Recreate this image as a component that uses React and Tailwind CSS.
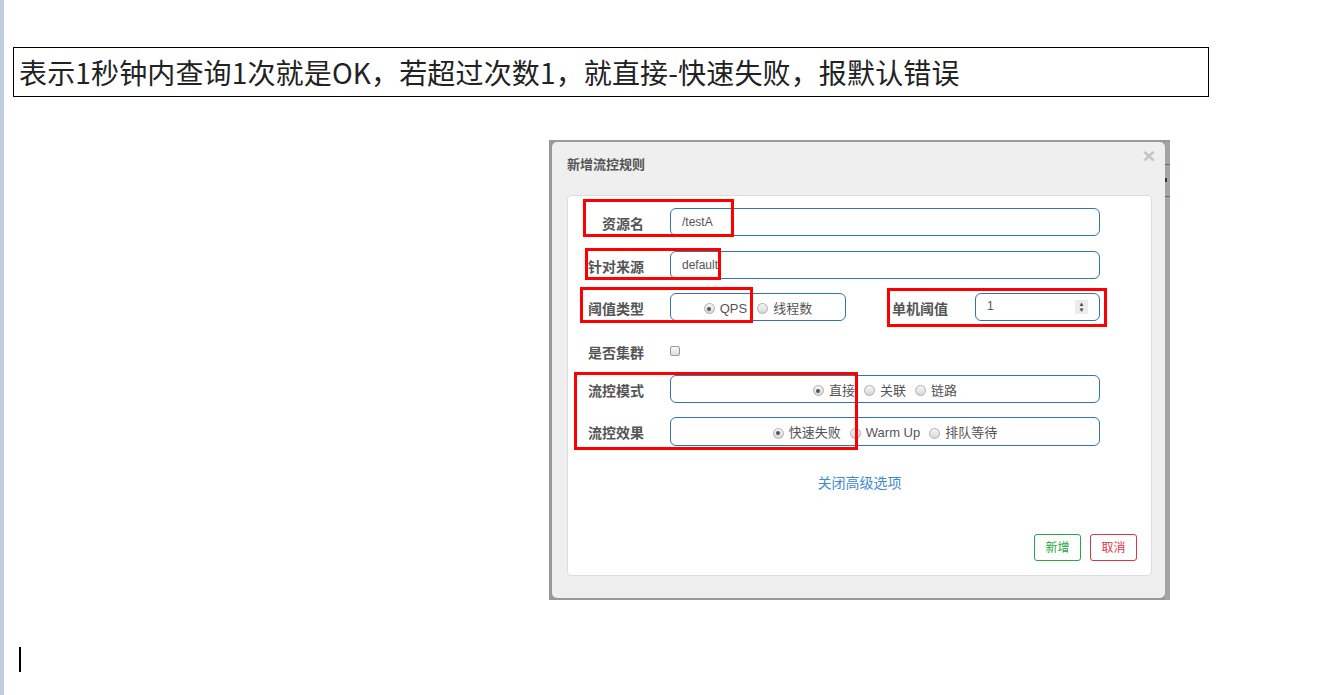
const font = "font-['Liberation_Sans','Noto_Sans_CJK_SC',sans-serif]"

function Radio({ checked, label }) {
  return (
    <span className="flex items-center gap-[5px]">
      <span className="flex h-[11px] w-[11px] items-center justify-center rounded-full border border-[#b0b0b0] bg-linear-to-b from-[#f7f7f7] to-[#d6d6d6]">
        {checked && <span className="h-[4px] w-[4px] rounded-full bg-[#555]" />}
      </span>
      <span>{label}</span>
    </span>
  )
}

function Label({ children, className = '' }) {
  return (
    <div className={`w-[76px] shrink-0 pt-[4px] text-right text-[14px] font-semibold text-[#555] ${className}`}>{children}</div>
  )
}

function Box({ children, className = '' }) {
  return (
    <div className={`flex h-full items-center rounded-[6px] border border-[#3572b0] text-[12px] text-[#555] ${className}`}>
      {children}
    </div>
  )
}

function Panel() {
  return (
    <div className="flex h-[381px] w-[585px] flex-col rounded-[4px] border border-[#dcdcdc] bg-white">
      <div className="mt-[12px] flex h-[28px] items-center">
        <Label>资源名</Label>
        <div className="ml-[26px] h-full w-[430px]">
          <Box className="pl-[11px]">/testA</Box>
        </div>
      </div>
      <div className="mt-[15px] flex h-[28px] items-center">
        <Label>针对来源</Label>
        <div className="ml-[26px] h-full w-[430px]">
          <Box className="pl-[11px]">default</Box>
        </div>
      </div>
      <div className="mt-[14px] flex h-[28px] items-center">
        <Label>阈值类型</Label>
        <div className="ml-[26px] h-full w-[176px]">
          <Box className="justify-center gap-[10px] pt-[3px] text-[13px]">
            <Radio checked label="QPS" />
            <Radio label="线程数" />
          </Box>
        </div>
        <div className="ml-[46px] w-[56px] shrink-0 pt-[4px] text-[14px] font-semibold text-[#555]">单机阈值</div>
        <div className="ml-[27px] h-full w-[125px]">
          <Box className="justify-between pl-[11px] pr-[11px]">
            <span className="-mt-[3px]">1</span>
            <span className="flex h-[14px] w-[13px] flex-col items-center justify-center bg-[#ececec] text-[6px] leading-[6px] text-[#444]">
              <span>▲</span>
              <span>▼</span>
            </span>
          </Box>
        </div>
      </div>
      <div className="mt-[16px] flex h-[28px] items-center">
        <Label>是否集群</Label>
        <div className="ml-[26px] h-[10px] w-[10px] rounded-[2px] border border-[#999] bg-linear-to-b from-[#fafafa] to-[#dedede]" />
      </div>
      <div className="mt-[10px] flex h-[28px] items-center">
        <Label>流控模式</Label>
        <div className="ml-[26px] h-full w-[430px]">
          <Box className="justify-center gap-[9px] pt-[3px] text-[13px]">
            <Radio checked label="直接" />
            <Radio label="关联" />
            <Radio label="链路" />
          </Box>
        </div>
      </div>
      <div className="mt-[14px] flex h-[29px] items-center">
        <Label>流控效果</Label>
        <div className="ml-[26px] h-full w-[430px]">
          <Box className="justify-center gap-[9px] pt-[3px] text-[13px]">
            <Radio checked label="快速失败" />
            <Radio label="Warm Up" />
            <Radio label="排队等待" />
          </Box>
        </div>
      </div>
      <div className="mt-[28px] text-center text-[14px] leading-[18px] text-[#3f8bd0]">关闭高级选项</div>
      <div className="mr-[14px] mt-[42px] flex justify-end gap-[9px] text-[12px]">
        <div className="flex h-[27px] w-[47px] items-center justify-center rounded-[3px] border border-[#28a745] text-[#28a745]">新增</div>
        <div className="flex h-[27px] w-[47px] items-center justify-center rounded-[3px] border border-[#dc3545] text-[#dc3545]">取消</div>
      </div>
    </div>
  )
}

function Shot() {
  return (
    <div className={`relative ml-[536px] mt-[43px] flex h-[460px] w-[621px] bg-[#999] pl-[3px] pt-[2px] ${font}`}>
      <div className="flex h-[456px] w-[613px] shrink-0 flex-col rounded-[5px] bg-[#efefef] pl-[15px] pr-[13px]">
        <div className="flex h-[53px] items-start justify-between">
          <span className="mt-[14px] text-[13px] font-bold leading-[18px] text-[#555]">新增流控规则</span>
          <span className="-mr-[3px] mt-[3px] text-[21px] font-bold leading-[21px] text-[#c2c2c2]">×</span>
        </div>
        <Panel />
      </div>
      <div className="flex w-[5px] flex-col bg-[#a4a4a4]">
        <div className="mt-[22px] h-px bg-[#3572b0]" />
        <div className="mt-[13px] h-[4px] w-[2px] bg-[#333]" />
        <div className="mt-[14px] h-px bg-[#3572b0]" />
      </div>

      <div className="absolute left-[34px] top-[59px] h-[38px] w-[151px] border-[3px] border-[#ff0000]" />
      <div className="absolute left-[36px] top-[108px] h-[32px] w-[136px] border-[3px] border-[#ff0000]" />
      <div className="absolute left-[31px] top-[147px] h-[36px] w-[173px] border-[3px] border-[#ff0000]" />
      <div className="absolute left-[338px] top-[148px] h-[39px] w-[220px] border-[3px] border-[#ff0000]" />
      <div className="absolute left-[25px] top-[232px] h-[78px] w-[284px] border-[3px] border-[#ff0000]" />
    </div>
  )
}

export default function App() {
  return (
    <div className="flex h-[695px] w-[1335px] overflow-hidden bg-white">
      <div className="w-[4px] shrink-0 bg-[#c2cedb]" />
      <div className="flex flex-col pl-[9px] pt-[47px]">
        <div className="flex h-[50px] w-[1196px] items-center border border-black pl-[5px] font-['Noto_Sans_CJK_SC',sans-serif] text-[28px] tracking-[0.15px] text-[#222]">
          表示1秒钟内查询1次就是OK，若超过次数1，就直接-快速失败，报默认错误
        </div>
        <Shot />
        <div className="ml-[6px] mt-[47px] h-[25px] w-[2px] bg-black" />
      </div>
    </div>
  )
}
